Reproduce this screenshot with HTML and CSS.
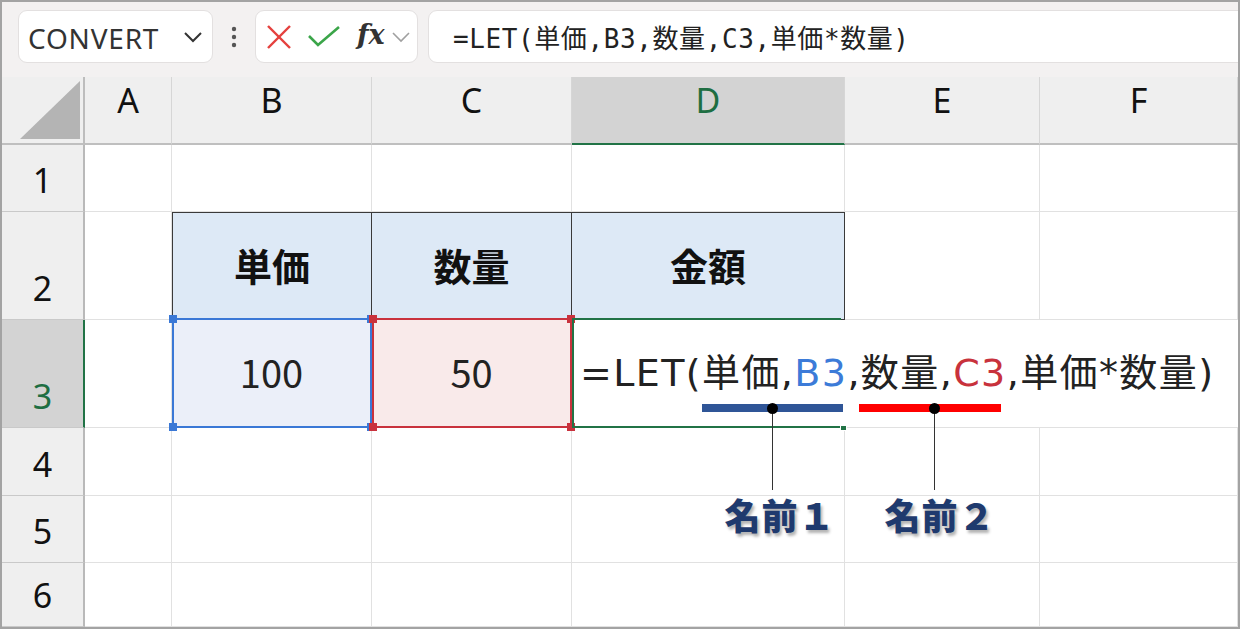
FILE: index.html
```html
<!DOCTYPE html>
<html lang="ja">
<head>
    <meta charset="UTF-8">
    <title>LET関数</title>
    <link rel="stylesheet" href="styles.css">
</head>
<body>
<div class="window">
    <!-- Formula bar -->
    <div class="toolbar">
        <div class="namebox">
            <span>CONVERT</span>
            <svg width="22" height="14" viewBox="0 0 22 14"><polyline points="3,3 11,11 19,3" fill="none" stroke="#333" stroke-width="2"/></svg>
        </div>
        <div class="grip">
            <svg width="6" height="22" viewBox="0 0 6 22"><circle cx="3" cy="3" r="2.2" fill="#555"/><circle cx="3" cy="11" r="2.2" fill="#555"/><circle cx="3" cy="19" r="2.2" fill="#555"/></svg>
        </div>
        <div class="fxbox">
            <svg class="ico" width="28" height="28" viewBox="0 0 28 28"><line x1="3" y1="3" x2="25" y2="25" stroke="#e5403d" stroke-width="2.4"/><line x1="25" y1="3" x2="3" y2="25" stroke="#e5403d" stroke-width="2.4"/></svg>
            <svg class="ico" width="34" height="24" viewBox="0 0 34 24"><polyline points="2,11 11,20 32,2" fill="none" stroke="#3ba549" stroke-width="2.6"/></svg>
            <span class="fx">fx</span>
            <svg width="20" height="12" viewBox="0 0 20 12"><polyline points="2,2 10,10 18,2" fill="none" stroke="#a0a0a0" stroke-width="1.6"/></svg>
        </div>
        <div class="formula">=LET(単価,B3,数量,C3,単価*数量)</div>
    </div>

    <!-- Sheet -->
    <div class="sheet">
        <div class="corner">
            <svg width="60" height="58" viewBox="0 0 60 58"><polygon points="0,58 60,58 60,0" fill="#b4b4b4"/></svg>
        </div>
        <div class="col">A</div>
        <div class="col">B</div>
        <div class="col">C</div>
        <div class="col active">D</div>
        <div class="col">E</div>
        <div class="col">F</div>

        <div class="row">1</div>
        <div class="cell"></div><div class="cell"></div><div class="cell"></div><div class="cell"></div><div class="cell"></div><div class="cell"></div>

        <div class="row">2</div>
        <div class="cell"></div>
        <div class="cell th first">単価</div>
        <div class="cell th">数量</div>
        <div class="cell th">金額</div>
        <div class="cell"></div><div class="cell"></div>

        <div class="row active">3</div>
        <div class="cell"></div>
        <div class="cell ref blue">100
            <div class="frame"><i class="tl"></i><i class="tr"></i><i class="bl"></i><i class="br"></i></div>
        </div>
        <div class="cell ref red">50
            <div class="frame"><i class="tl"></i><i class="tr"></i><i class="bl"></i><i class="br"></i></div>
        </div>
        <div class="cell editing">
            <div class="frame"><i class="handle"></i></div>
            <span class="entry">=LET(単価,<b class="c-blue">B3</b>,数量,<b class="c-red">C3</b>,単価*数量)</span>
        </div>
        <div class="cell spill"></div>
        <div class="cell spill"></div>

        <div class="row">4</div>
        <div class="cell"></div><div class="cell"></div><div class="cell"></div><div class="cell"></div><div class="cell"></div><div class="cell"></div>

        <div class="row">5</div>
        <div class="cell"></div><div class="cell"></div><div class="cell"></div><div class="cell"></div><div class="cell"></div><div class="cell"></div>

        <div class="row">6</div>
        <div class="cell"></div><div class="cell"></div><div class="cell"></div><div class="cell"></div><div class="cell"></div><div class="cell"></div>

        <!-- Callouts -->
        <div class="bar bar-blue"></div>
        <div class="bar bar-red"></div>
        <div class="stem stem-1"></div>
        <div class="stem stem-2"></div>
        <div class="dot dot-1"></div>
        <div class="dot dot-2"></div>
        <div class="label label-1">名前１</div>
        <div class="label label-2">名前２</div>
    </div>
</div>
</body>
</html>
```

FILE: styles.css
```css
* {
    margin: 0;
    padding: 0;
    box-sizing: border-box;
}

body {
    background: #fff;
    font-family: "Noto Sans", "Noto Sans CJK JP", sans-serif;
    color: #111;
}

.window {
    width: 1240px;
    height: 629px;
    border: 2px solid #a3a3a3;
    overflow: hidden;
    background: #fff;
}

/* Formula bar */
.toolbar {
    height: 75px;
    background: #f3f1f1;
    display: flex;
    align-items: flex-start;
    padding: 8px 0 0 16px;
    overflow: hidden;
}

.namebox {
    width: 195px;
    height: 53px;
    background: #fff;
    border: 1px solid #e3e0e0;
    border-radius: 9px;
    display: flex;
    align-items: center;
    justify-content: space-between;
    padding: 3px 8px 0 9px;
    font-size: 28px;
    letter-spacing: 0.8px;
    color: #333;
}

.namebox svg {
    margin-top: -3px;
}

.grip {
    width: 42px;
    height: 53px;
    display: flex;
    align-items: center;
    justify-content: center;
}

.fxbox {
    width: 163px;
    height: 53px;
    background: #fff;
    border: 1px solid #e3e0e0;
    border-radius: 9px;
    display: flex;
    align-items: center;
    padding-left: 9px;
}

.fxbox .ico {
    margin-right: 14px;
}

.fx {
    font-family: "DejaVu Serif", serif;
    font-style: italic;
    font-weight: 700;
    font-size: 27px;
    color: #333;
    margin: -4px 6px 0 2px;
}

.formula {
    flex: 1;
    height: 53px;
    margin: 0 -30px 0 10px;
    background: #fff;
    border: 1px solid #e3e0e0;
    border-radius: 9px;
    padding-left: 24px;
    display: flex;
    align-items: center;
    font-family: "DejaVu Sans Mono", "Noto Sans CJK JP", monospace;
    font-size: 26px;
    letter-spacing: 0.6px;
    color: #222;
}

/* Sheet grid */
.sheet {
    position: relative;
    display: grid;
    grid-template-columns: 83px 87px 200px 200px 273px 195px 198px;
    grid-template-rows: 68px 67px 108px 108px 68px 67px 64px;
}

.corner {
    background: #efefef;
    border-right: 2px solid #bdbdbd;
    border-bottom: 2px solid #bfbfbf;
    display: flex;
    align-items: flex-end;
    justify-content: flex-end;
    padding: 0 3px 4px 0;
}

.col {
    background: #efefef;
    border-right: 1px solid #d6d6d6;
    border-bottom: 2px solid #bfbfbf;
    display: flex;
    align-items: center;
    justify-content: center;
    padding-bottom: 20px;
    font-size: 34px;
}

.col.active {
    background: #d3d3d3;
    color: #1e6e42;
    border-bottom-color: #217346;
}

.row {
    background: #efefef;
    border-right: 2px solid #b9b9b9;
    border-bottom: 1px solid #c9c9c9;
    display: flex;
    align-items: flex-end;
    justify-content: center;
    padding-bottom: 14px;
    font-size: 34px;
    line-height: 1;
}

.row.active {
    background: #d3d3d3;
    color: #1e6e42;
    border-right-color: #217346;
}

.cell {
    position: relative;
    border-right: 1px solid #e1e1e1;
    border-bottom: 1px solid #e1e1e1;
    display: flex;
    align-items: center;
    justify-content: center;
    padding-bottom: 4px;
    font-family: "Noto Sans CJK JP", sans-serif;
    font-size: 38px;
    color: #222;
}

/* Table header */
.th {
    background: #dde9f6;
    border-top: 1px solid #3a3a3a;
    border-right: 1px solid #3a3a3a;
    border-bottom: 1px solid #3a3a3a;
    font-weight: 700;
    color: #111;
}

.th.first {
    border-left: 1px solid #3a3a3a;
}

/* Referenced cells */
.ref.blue { background: #ebeff9; }
.ref.red { background: #f9eaea; }

.frame {
    position: absolute;
    top: -2px;
    left: 0;
    right: -1px;
    bottom: -1px;
    border: 2px solid;
    z-index: 1;
}

.blue .frame { border-color: #3a78d6; }
.red .frame { border-color: #c9323d; }

.frame i {
    position: absolute;
    width: 8px;
    height: 8px;
    z-index: 3;
}

.blue .frame i { background: #3a78d6; }
.red .frame i { background: #c9323d; }

.frame .tl { left: -5px; top: -5px; }
.frame .tr { right: -5px; top: -5px; }
.frame .bl { left: -5px; bottom: -5px; }
.frame .br { right: -5px; bottom: -5px; }

/* Cell being edited */
.editing {
    border-right: none;
    justify-content: flex-start;
    padding-left: 8px;
    padding-bottom: 8px;
    overflow: visible;
}

.editing .frame {
    border: 2px solid #217346;
    border-right: none;
    right: 4px;
    z-index: 2;
}

.editing .frame .handle {
    right: -6px;
    bottom: -5px;
    width: 7px;
    height: 6px;
    background: #217346;
    border: 1px solid #fff;
}

.entry {
    white-space: nowrap;
    position: relative;
    z-index: 2;
    font-family: "DejaVu Sans", "Noto Sans CJK JP", sans-serif;
    letter-spacing: 1.4px;
}

.entry b { font-weight: 400; }
.c-blue { color: #3c7bd8; }
.c-red { color: #c8323c; }

.spill {
    border-right: none;
}

/* Callouts */
.bar {
    position: absolute;
    top: 327px;
    height: 8px;
    z-index: 4;
}

.bar-blue { left: 700px; width: 141px; background: #2f5597; }
.bar-red { left: 857px; width: 142px; background: #ff0000; }

.stem {
    position: absolute;
    top: 331px;
    width: 1px;
    height: 82px;
    background: #333;
    z-index: 4;
}

.stem-1 { left: 770px; }
.stem-2 { left: 932px; }

.dot {
    position: absolute;
    top: 326px;
    width: 11px;
    height: 11px;
    border-radius: 50%;
    background: #000;
    z-index: 5;
}

.dot-1 { left: 765px; }
.dot-2 { left: 927px; }

.label {
    position: absolute;
    top: 419px;
    width: 150px;
    text-align: center;
    font-family: "Noto Sans CJK JP", sans-serif;
    font-weight: 900;
    font-size: 36px;
    letter-spacing: 1px;
    line-height: 1;
    color: #1f3a6e;
    text-shadow: 2px 3px 3px rgba(0, 0, 0, 0.3);
    z-index: 4;
}

.label-1 { left: 703px; }
.label-2 { left: 863px; }
```
